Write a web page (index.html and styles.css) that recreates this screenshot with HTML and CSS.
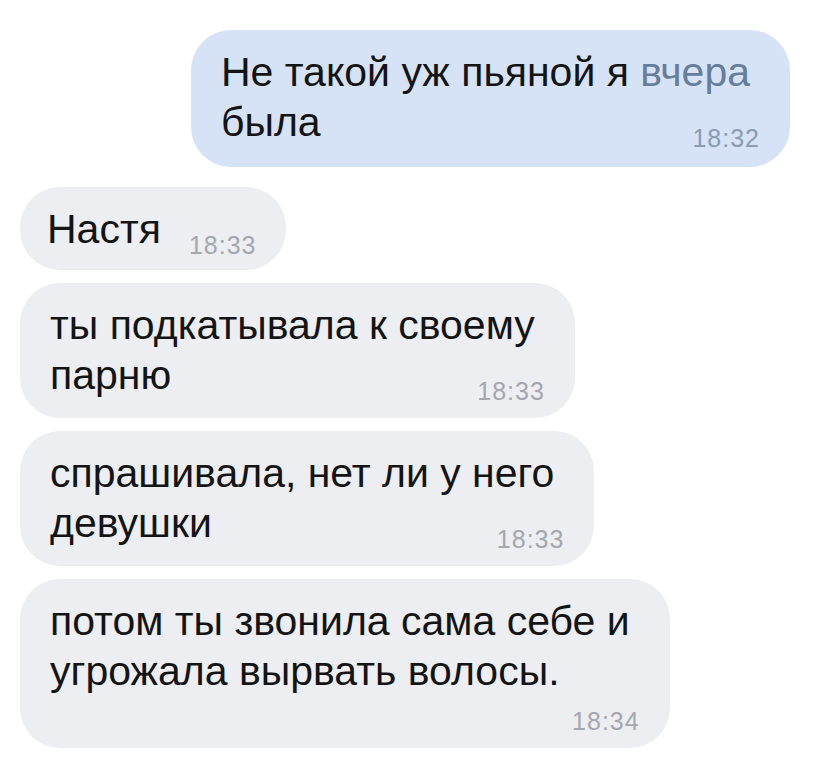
FILE: index.html
```html
<!DOCTYPE html>
<html lang="ru">

<head>
    <meta charset="UTF-8">
    <meta name="viewport" content="width=device-width, initial-scale=1.0">
    <title>Чат</title>
    <link rel="stylesheet" href="styles.css">
</head>

<body>
    <div class="chat">
        <div class="msg out">
            <p class="line">Не такой уж пьяной я <span class="hint">вчера</span></p>
            <p class="row"><span>была</span><span class="time">18:32</span></p>
        </div>
        <div class="msg short">
            <p class="row"><span>Настя</span><span class="time">18:33</span></p>
        </div>
        <div class="msg">
            <p class="line">ты подкатывала к своему</p>
            <p class="row"><span>парню</span><span class="time">18:33</span></p>
        </div>
        <div class="msg">
            <p class="line">спрашивала, нет ли у него</p>
            <p class="row"><span>девушки</span><span class="time">18:33</span></p>
        </div>
        <div class="msg">
            <p class="line">потом ты звонила сама себе и</p>
            <p class="line">угрожала вырвать волосы.</p>
            <p class="row stamp"><span class="time">18:34</span></p>
        </div>
    </div>
</body>

</html>
```

FILE: styles.css
```css
* {
    padding: 0;
    margin: 0;
    box-sizing: border-box;
}

body {
    background-color: #fff;
    font-family: "Liberation Sans", Arial, sans-serif;
    color: #141414;
}

.chat {
    display: flex;
    flex-direction: column;
    gap: 13px;
    padding: 30px 34px 20px 20px;
}

.msg {
    align-self: flex-start;
    padding: 17px 30px 18px 30px;
    border-radius: 40px;
    background-color: #eceef1;
    font-size: 41px;
    line-height: 50px;
}

.msg.out {
    align-self: flex-end;
    padding-bottom: 20px;
    margin-bottom: 7px;
    background-color: #d6e3f6;
}

.msg.short {
    padding-left: 27px;
    padding-bottom: 16px;
}

.short .row {
    gap: 28px;
}

.line {
    padding-right: 10px;
    white-space: nowrap;
}

.row {
    display: flex;
    justify-content: space-between;
    align-items: flex-end;
    gap: 33px;
    white-space: nowrap;
}

.stamp {
    justify-content: flex-end;
    margin-top: 13px;
}

.time {
    font-size: 25px;
    line-height: 25px;
    letter-spacing: 1px;
    margin-bottom: -4px;
    color: #a4a7ad;
}

.out .time {
    color: #8a9cb2;
}

.hint {
    color: #667e9b;
}
```
